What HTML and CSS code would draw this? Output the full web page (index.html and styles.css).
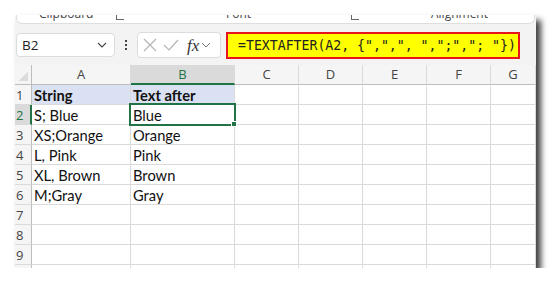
FILE: index.html
```html
<!DOCTYPE html>
<html lang="en">
<head>
    <meta charset="UTF-8">
    <meta name="viewport" content="width=device-width, initial-scale=1.0">
    <title>TEXTAFTER</title>
    <link rel="stylesheet" href="styles.css">
</head>
<body>
    <div class="frame">
        <div class="ribbon">
            <span class="grp grp-clip">Clipboard</span>
            <span class="launch l1"></span>
            <span class="grp grp-font">Font</span>
            <span class="launch l2"></span>
            <span class="grp grp-align">Alignment</span>
        </div>

        <div class="fbar">
            <div class="namebox">
                <span>B2</span>
                <svg width="10" height="6" viewBox="0 0 10 6"><path d="M1 1 L5 5 L9 1" fill="none" stroke="#444" stroke-width="1.1"/></svg>
            </div>
            <div class="dots">
                <i></i><i></i><i></i>
            </div>
            <div class="fxbox">
                <svg width="14" height="14" viewBox="0 0 14 14"><path d="M1 1 L13 13 M13 1 L1 13" stroke="#b4b4b4" stroke-width="1.2"/></svg>
                <svg width="16" height="14" viewBox="0 0 16 14"><path d="M1 7 L6 12 L15 2" fill="none" stroke="#b4b4b4" stroke-width="1.2"/></svg>
                <span class="fx">fx</span>
                <svg width="10" height="6" viewBox="0 0 10 6"><path d="M1 1 L5 5 L9 1" fill="none" stroke="#777" stroke-width="1"/></svg>
            </div>
            <div class="formula">=TEXTAFTER(A2, {",",", ",";","; "})</div>
        </div>

        <div class="sheet">
            <div class="hd corner"></div>
            <div class="hd">A</div>
            <div class="hd hd-sel">B</div>
            <div class="hd">C</div>
            <div class="hd">D</div>
            <div class="hd">E</div>
            <div class="hd">F</div>
            <div class="hd">G</div>

            <div class="rn">1</div>
            <div class="c title">String</div>
            <div class="c title">Text after</div>
            <div class="c"></div><div class="c"></div><div class="c"></div><div class="c"></div><div class="c"></div>

            <div class="rn rn-sel">2</div>
            <div class="c">S; Blue</div>
            <div class="c active">Blue<span class="handle"></span></div>
            <div class="c"></div><div class="c"></div><div class="c"></div><div class="c"></div><div class="c"></div>

            <div class="rn">3</div>
            <div class="c">XS;Orange</div>
            <div class="c">Orange</div>
            <div class="c"></div><div class="c"></div><div class="c"></div><div class="c"></div><div class="c"></div>

            <div class="rn">4</div>
            <div class="c">L, Pink</div>
            <div class="c">Pink</div>
            <div class="c"></div><div class="c"></div><div class="c"></div><div class="c"></div><div class="c"></div>

            <div class="rn">5</div>
            <div class="c">XL, Brown</div>
            <div class="c">Brown</div>
            <div class="c"></div><div class="c"></div><div class="c"></div><div class="c"></div><div class="c"></div>

            <div class="rn">6</div>
            <div class="c">M;Gray</div>
            <div class="c">Gray</div>
            <div class="c"></div><div class="c"></div><div class="c"></div><div class="c"></div><div class="c"></div>

            <div class="rn">7</div>
            <div class="c"></div><div class="c"></div><div class="c"></div><div class="c"></div><div class="c"></div><div class="c"></div><div class="c"></div>

            <div class="rn">8</div>
            <div class="c"></div><div class="c"></div><div class="c"></div><div class="c"></div><div class="c"></div><div class="c"></div><div class="c"></div>

            <div class="rn">9</div>
            <div class="c"></div><div class="c"></div><div class="c"></div><div class="c"></div><div class="c"></div><div class="c"></div><div class="c"></div>

            <div class="rn"></div>
            <div class="c"></div><div class="c"></div><div class="c"></div><div class="c"></div><div class="c"></div><div class="c"></div><div class="c"></div>
        </div>
    </div>
</body>
</html>
```

FILE: styles.css
```css
* {
    margin: 0;
    padding: 0;
    box-sizing: border-box;
}

body {
    background-color: white;
    font-family: Lato, "Open Sans", sans-serif;
}

.frame {
    margin: 15px 0 0 15px;
    width: 521px;
    height: 253px;
    overflow: hidden;
    background-color: #f3f3f3;
    box-shadow: 5px 5px 6px rgba(0, 0, 0, 0.75);
    display: flex;
    flex-direction: column;
}

.frame > div {
    flex-shrink: 0;
}

/* ribbon group labels, cut off at the top */
.ribbon {
    position: relative;
    height: 9px;
    margin: 0 1px;
    background-color: white;
    border: 1px solid #dedede;
    border-top: none;
    border-radius: 0 0 6px 6px;
    overflow: hidden;
    font-family: "Open Sans", sans-serif;
    font-size: 12px;
    line-height: 16px;
    color: #444;
}

.grp {
    position: absolute;
    top: -9px;
}

.grp-clip { left: 22px; }
.grp-font { left: 209px; }
.grp-align { left: 414px; }

.launch {
    position: absolute;
    top: -3px;
    width: 8px;
    height: 8px;
    border-left: 1px solid #666;
    border-bottom: 1px solid #666;
}

.l1 { left: 99px; }
.l2 { left: 334px; }

.fbar {
    height: 41px;
    display: flex;
    align-items: flex-start;
    padding-top: 8px;
}

.namebox {
    margin-top: 1px;
    margin-left: 1px;
    width: 99px;
    height: 24px;
    background-color: white;
    border: 1px solid #dcdcdc;
    border-radius: 4px;
    display: flex;
    align-items: center;
    justify-content: space-between;
    padding: 0 7px 0 5px;
    font-family: "Open Sans", sans-serif;
    font-size: 13.5px;
    color: #222;
}

.dots {
    width: 22px;
    height: 26px;
    display: flex;
    flex-direction: column;
    align-items: center;
    justify-content: center;
    gap: 2px;
}

.dots i {
    width: 2px;
    height: 2px;
    background-color: #444;
}

.fxbox {
    width: 84px;
    height: 26px;
    background-color: white;
    border: 1px solid #dcdcdc;
    border-radius: 4px;
    display: flex;
    align-items: center;
    padding-left: 5px;
    gap: 6px;
}

.fx {
    font-family: "Liberation Serif", serif;
    font-style: italic;
    font-size: 17px;
    color: #333;
    margin-left: 2px;
    margin-right: -4px;
    line-height: 1;
}

.formula {
    margin-left: 5px;
    width: 294px;
    height: 27px;
    background-color: #ffff00;
    border: 2px solid #e8141c;
    padding-left: 10px;
    font-family: "DejaVu Sans Mono", monospace;
    font-size: 13.2px;
    line-height: 23px;
    color: #222;
    white-space: pre;
}

/* worksheet grid */
.sheet {
    display: grid;
    grid-template-columns: 17px 99px 104px 64px 64px 64px 64px 45px;
    grid-template-rows: repeat(11, 20px);
    background-color: white;
    font-size: 14.7px;
    color: #111;
}

.hd {
    background-color: #f5f5f5;
    border-right: 1px solid #dadada;
    border-bottom: 1px solid #bdbdbd;
    text-align: center;
    font-family: "Open Sans", sans-serif;
    font-size: 13px;
    line-height: 19px;
    color: #444;
}

.corner {
    background: linear-gradient(135deg, #f5f5f5 55%, #dcdcdc 55%) no-repeat;
    background-size: 10px 10px;
    background-position: right 3px bottom 3px;
    background-color: #f5f5f5;
    border-right: 1px solid #bdbdbd;
}

.hd-sel {
    background-color: #dadada;
    border-bottom: 2px solid #217346;
    color: #217346;
}

.rn {
    background-color: #f5f5f5;
    border-right: 1px solid #bdbdbd;
    border-bottom: 1px solid #dadada;
    font-family: "Open Sans", sans-serif;
    font-size: 13px;
    line-height: 21px;
    padding-left: 1px;
    color: #444;
    overflow: hidden;
}

.rn-sel {
    border-right: 2px solid #217346;
    color: #217346;
    background-color: #dadada;
}

.c {
    border-right: 1px solid #dadada;
    border-bottom: 1px solid #dadada;
    padding-left: 2px;
    line-height: 21px;
    white-space: nowrap;
}

.title {
    background-color: #d9e1f2;
    font-weight: bold;
}

.active {
    position: relative;
}

.active::after {
    content: "";
    position: absolute;
    left: -2px;
    top: -2px;
    right: -2px;
    bottom: -2px;
    border: 2px solid #217346;
}

.handle {
    position: absolute;
    right: -3px;
    bottom: -3px;
    width: 6px;
    height: 6px;
    background-color: #217346;
    border: 1px solid white;
    z-index: 1;
}
```
